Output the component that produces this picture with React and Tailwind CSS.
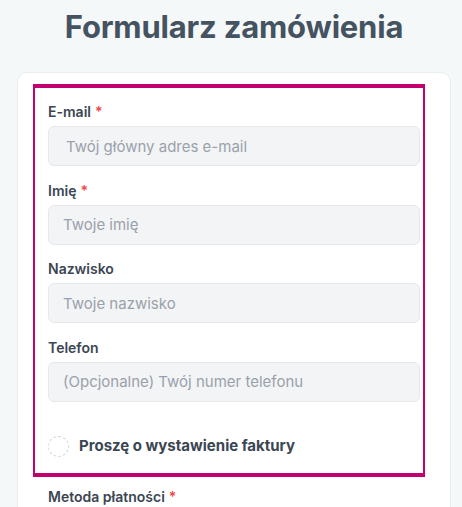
import { useState } from 'react';

const fields = [
    { id: 'email', label: 'E-mail', required: true, placeholder: 'Twój główny adres e-mail', type: 'email', pad: 'pl-[17px]' },
    { id: 'first', label: 'Imię', required: true, placeholder: 'Twoje imię', type: 'text', pad: 'pl-[14px]' },
    { id: 'last', label: 'Nazwisko', required: false, placeholder: 'Twoje nazwisko', type: 'text', pad: 'pl-[14px]' },
    { id: 'phone', label: 'Telefon', required: false, placeholder: '(Opcjonalne) Twój numer telefonu', type: 'tel', pad: 'pl-[14px]' },
];

function Label({ children, required, htmlFor }) {
    return (
        <label htmlFor={htmlFor} className="block text-[14px] leading-5 font-semibold text-[#3b4653]">
            {children}
            {required && <span className="text-[#ef4444] ml-1">*</span>}
        </label>
    );
}

export default function App() {
    const [invoice, setInvoice] = useState(false);

    return (
        <div className="min-h-screen bg-[#f4f8f9] font-['Inter',sans-serif] overflow-hidden">
            <h1 className="text-center text-[31px] leading-[40px] pt-[7px] pl-[6px] font-bold text-[#455361] tracking-[-0.2px]">
                Formularz zamówienia
            </h1>

            <div className="mt-[25px] ml-[17px] mr-[11px] bg-white border border-[#e8edf1] rounded-[10px] pt-[11px] pl-[15px] pr-[25px] pb-10">
                <div className="border-[#c2006f] border-t-4 border-b-4 border-x-2 pt-[14px] pl-[13px] pr-[3px] pb-[14px]">
                    <div className="flex flex-col gap-[14.5px]">
                        {fields.map(f => (
                            <div key={f.id}>
                                <Label htmlFor={f.id} required={f.required}>{f.label}</Label>
                                <input
                                    id={f.id}
                                    type={f.type}
                                    placeholder={f.placeholder}
                                    className={`mt-1 block w-full h-10 rounded-[6px] bg-[#f3f4f5] border border-[#e6e8eb] ${f.pad} pr-3 text-[15px] text-[#374151] placeholder:text-[#9aa1ab] outline-none`}
                                />
                            </div>
                        ))}
                    </div>

                    <label className="mt-[33px] flex items-center gap-[10px] h-6 cursor-pointer">
                        <button
                            type="button"
                            onClick={() => setInvoice(!invoice)}
                            className={`w-[21px] h-[21px] rounded-full border border-dashed ${invoice ? 'bg-[#c2006f] border-[#c2006f]' : 'border-[#cfd3d8] bg-white'}`}
                        ></button>
                        <span className="text-[15px] font-bold text-[#3b4653]">Proszę o wystawienie faktury</span>
                    </label>
                </div>

                <div className="pl-[15px] pt-[10px]">
                    <Label required>Metoda płatności</Label>
                </div>
            </div>
        </div>
    );
}
